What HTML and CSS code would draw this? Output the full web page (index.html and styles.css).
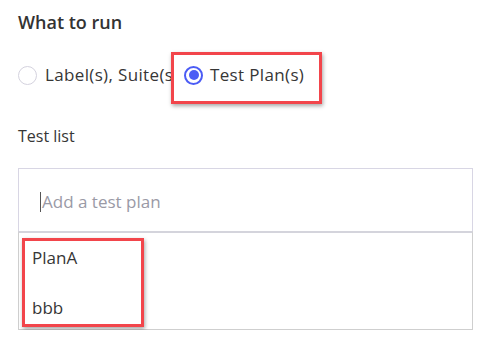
FILE: index.html
```html
<!DOCTYPE html>
<html>
<head>
<meta charset="utf-8">
<link rel="stylesheet" href="styles.css">
</head>
<body>
<div class="page">
  <h2 class="title">What to run</h2>
  <div class="radios">
    <label class="option clipped">
      <span class="radio"></span>
      <span class="opt-text">Label(s), Suite(s)</span>
    </label>
    <div class="highlight hl-radio">
      <label class="option checked-opt">
        <span class="radio checked"></span>
        <span class="opt-text">Test Plan(s)</span>
      </label>
    </div>
  </div>
  <div class="field-label">Test list</div>
  <div class="combo">
    <div class="input"><span class="caret"></span><span class="placeholder">Add a test plan</span></div>
    <div class="list">
      <div class="highlight hl-list">
        <div class="item">PlanA</div>
        <div class="item">bbb</div>
      </div>
    </div>
  </div>
</div>
</body>
</html>
```
FILE: styles.css
```css
html, body { margin: 0; padding: 0; background: #fff; }
body { font-family: "Open Sans", Lato, sans-serif; color: #363636; }
.page { padding: 11px 14px 0 18px; }
.title { margin: 0; font-size: 18px; font-weight: 600; line-height: 22px; color: #333; }
.radios { display: flex; align-items: flex-start; margin-top: 19px; height: 52px; }
.option { display: flex; align-items: center; gap: 8px; font-size: 17px; line-height: 20px; white-space: nowrap; letter-spacing: 0.35px; }
.checked-opt { gap: 7px; }
.clipped { width: 153px; overflow: hidden; flex-shrink: 0; margin-top: 13px; }
.radio { width: 19px; height: 19px; border: 1px solid #d4d2de; border-radius: 50%; box-sizing: border-box; flex-shrink: 0; display: flex; align-items: center; justify-content: center; }
.radio.checked { border: 2px solid #4b5cf5; }
.radio.checked::after { content: ""; width: 10px; height: 10px; border-radius: 50%; background: #4b5cf5; }
.highlight { border: 3px solid #f2454b; box-shadow: 1px 2px 4px rgba(0,0,0,0.35); box-sizing: border-box; }
.hl-radio { width: 151px; height: 52px; padding: 10px 0 0 10px; }
.field-label { font-size: 16px; line-height: 20px; margin-top: 22px; }
.combo { margin-top: 22px; width: 455px; }
.input { height: 63px; border: 1px solid #d8d6e4; border-bottom: 0; box-sizing: border-box; display: flex; align-items: center; padding-left: 21px; padding-top: 3px; }
.caret { width: 1px; height: 20px; background: #555; margin-right: 1px; }
.placeholder { font-size: 17px; color: #9a9aa6; }
.list { height: 99px; border: 1px solid #cfcfcf; border-top: 2px solid #d4d4dc; box-sizing: border-box; padding: 5px 0 0 3px; }
.hl-list { width: 122px; height: 89px; padding: 7px 0 0 7px; }
.item { font-size: 17px; line-height: 20px; height: 20px; }
.item + .item { margin-top: 30px; }
```
